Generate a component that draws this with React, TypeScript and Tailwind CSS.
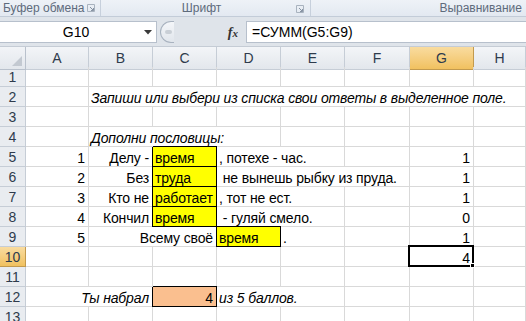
import React from "react";

const COLS = "grid grid-cols-[26px_63px_64px_64px_64px_64px_65px_64px_1fr]";

const spanCls: Record<number, string> = {
  1: "col-span-1",
  2: "col-span-2",
  3: "col-span-3",
  4: "col-span-4",
  5: "col-span-5",
  6: "col-span-6",
  7: "col-span-7",
};

type CellDef = {
  span?: number;
  text?: string;
  align?: "left" | "right";
  italic?: boolean;
  kind?: "yellow" | "orange" | "selected";
};

function Cell({ c }: { c: CellDef }) {
  const span = c.span ?? 1;
  const base =
    "h-[20px] flex items-end pb-[1px] whitespace-pre overflow-visible border-r border-b tracking-[-0.14px]";
  let extra = "border-[#d9d9d9]";
  if (c.kind === "yellow") extra = "bg-[#ffff00] border-black shadow-[-1px_0_0_0_#000,0_-1px_0_0_#000]";
  if (c.kind === "orange") extra = "bg-[#fabf8f] border-black shadow-[-1px_0_0_0_#000,0_-1px_0_0_#000]";
  if (c.kind === "selected") extra = "border-[#d9d9d9] relative";
  const al = c.align === "right" ? "justify-end pr-[3px]" : "justify-start pl-[2px]";
  return (
    <div className={`${spanCls[span]} ${base} ${extra} ${al} ${c.italic ? "italic" : ""}`}>
      <span className="leading-none">{c.text ?? ""}</span>
      {c.kind === "selected" && (
        <div className="absolute -left-[2px] -top-[2px] -right-[1px] -bottom-[1px] border-2 border-black z-10">
          <div className="absolute -right-[3px] -bottom-[3px] w-[5px] h-[5px] bg-black border border-white" />
        </div>
      )}
    </div>
  );
}

const E: CellDef = {};

const rows: CellDef[][] = [
  [E, E, E, E, E, E, E, E],
  [E, { span: 7, italic: true, text: "Запиши или выбери из списка свои ответы в выделенное поле." }],
  [E, E, E, E, E, E, E, E],
  [E, { span: 3, italic: true, text: "Дополни пословицы:" }, E, E, E, E],
  [
    { text: "1", align: "right" },
    { text: "Делу -", align: "right" },
    { text: "время", kind: "yellow" },
    { span: 2, text: ", потехе - час." },
    E,
    { text: "1", align: "right" },
    E,
  ],
  [
    { text: "2", align: "right" },
    { text: "Без", align: "right" },
    { text: "труда", kind: "yellow" },
    { span: 3, text: " не вынешь рыбку из пруда." },
    { text: "1", align: "right" },
    E,
  ],
  [
    { text: "3", align: "right" },
    { text: "Кто не", align: "right" },
    { text: "работает", kind: "yellow" },
    { span: 2, text: ", тот не ест." },
    E,
    { text: "1", align: "right" },
    E,
  ],
  [
    { text: "4", align: "right" },
    { text: "Кончил", align: "right" },
    { text: "время", kind: "yellow" },
    { span: 2, text: " - гуляй смело." },
    E,
    { text: "0", align: "right" },
    E,
  ],
  [
    { text: "5", align: "right" },
    { span: 2, text: "Всему своё", align: "right" },
    { text: "время", kind: "yellow" },
    { text: "." },
    E,
    { text: "1", align: "right" },
    E,
  ],
  [E, E, E, E, E, E, { text: "4", align: "right", kind: "selected" }, E],
  [E, E, E, E, E, E, E, E],
  [
    { span: 2, italic: true, text: "Ты набрал", align: "right" },
    { text: "4", align: "right", kind: "orange" },
    { span: 2, italic: true, text: "из 5 баллов." },
    E,
    E,
    E,
  ],
  [E, E, E, E, E, E, E, E],
];

function Launcher() {
  return (
    <svg width="8" height="8" viewBox="0 0 8 8" className="shrink-0">
      <path d="M0.5 0.5H7.5V7.5H0.5Z" fill="none" stroke="#a9b3bf" strokeWidth="1" />
      <path d="M3 3L6.5 6.5M4 6.5H6.5V4" fill="none" stroke="#8793a3" strokeWidth="1" />
    </svg>
  );
}

export default function App() {
  const headers = ["A", "B", "C", "D", "E", "F", "G", "H"];
  return (
    <div className="w-[526px] h-[321px] overflow-hidden bg-white font-['Liberation_Sans',sans-serif] text-[14px] text-black">
      {/* Ribbon group labels */}
      <div className="h-[17px] flex bg-gradient-to-b from-[#eef2f7] to-[#e3e9f1] border-b border-[#c3ccd8] text-[12px] text-[#5e6b7c]">
        <div className="w-[101px] flex items-center justify-between pl-[3px] pr-[5px] border-r border-[#c7d0dc]">
          <span>Буфер обмена</span>
          <Launcher />
        </div>
        <div className="w-[210px] flex items-center justify-center relative border-r border-[#c7d0dc] pr-[8px]">
          <span>Шрифт</span>
          <span className="absolute right-[6px] top-[5px]"><Launcher /></span>
        </div>
        <div className="flex-1 flex items-center justify-end pr-[4px]">
          <span>Выравнивание</span>
        </div>
      </div>

      {/* Formula bar */}
      <div className="h-[30px] bg-[#dfe4ea] flex items-start pt-[4px] border-b border-[#c5ccd5]">
        <div className="w-[157px] h-[22px] bg-white border border-[#b7c0cc] border-l-0 flex items-center relative">
          <span className="flex-1 text-center pl-[8px]">G10</span>
          <svg width="8" height="5" viewBox="0 0 8 5" className="mr-[4px]">
            <path d="M0 0H8L4 4.5Z" fill="#3a3a3a" />
          </svg>
        </div>
        <div className="w-[89px] h-[22px] flex items-center">
          <div className="ml-[3px] w-[14px] h-[22px] rounded-l-full border border-r-0 border-[#a8b2bf] bg-gradient-to-b from-[#f4f6f9] to-[#e1e6ec] flex items-center justify-center">
            <div className="w-[7px] h-[4px] rounded-full bg-[#c9cfd6] ml-[2px]" />
          </div>
          <div className="flex-1" />
          <span className="font-['Liberation_Serif',serif] italic font-bold text-[14px] text-[#333] mr-[8px]">
            f<span className="text-[11px]">x</span>
          </span>
        </div>
        <div className="flex-1 h-[22px] bg-white border border-[#b7c0cc] border-r-0 flex items-center pl-[5px]">
          <span>=СУММ(G5:G9)</span>
        </div>
      </div>

      {/* Column headers */}
      <div className={`${COLS} h-[20px] text-[#2e3b4c]`}>
        <div className="border-r border-b border-[#b9c1cc] bg-gradient-to-b from-[#f2f4f7] to-[#e3e7ec] relative">
          <svg width="10" height="10" viewBox="0 0 10 10" className="absolute right-[3px] bottom-[3px]">
            <path d="M10 0V10H0Z" fill="#c3c9d1" />
          </svg>
        </div>
        {headers.map((h) =>
          h === "G" ? (
            <div
              key={h}
              className="flex items-center justify-center pt-[1px] border-r border-b border-[#c29a4e] bg-gradient-to-b from-[#f9dc9f] to-[#f1c15f]"
            >
              {h}
            </div>
          ) : (
            <div
              key={h}
              className="flex items-center justify-center pt-[1px] border-r border-b border-[#c6cdd6] bg-gradient-to-b from-[#f3f5f8] to-[#e3e7ec]"
            >
              {h}
            </div>
          )
        )}
      </div>

      {/* Rows */}
      {rows.map((r, i) => {
        const n = i + 1;
        const sel = n === 10;
        return (
          <div key={n} className={COLS}>
            <div
              className={`h-[20px] flex items-center justify-center pt-[2px] border-r border-b text-[#2e3b4c] ${
                sel
                  ? "bg-gradient-to-b from-[#f9dc9f] to-[#f1c15f] border-[#c29a4e]"
                  : "bg-[#e9ecf0] border-[#c6cdd6]"
              }`}
            >
              {n}
            </div>
            {r.map((c, j) => (
              <Cell key={j} c={c} />
            ))}
          </div>
        );
      })}
    </div>
  );
}
